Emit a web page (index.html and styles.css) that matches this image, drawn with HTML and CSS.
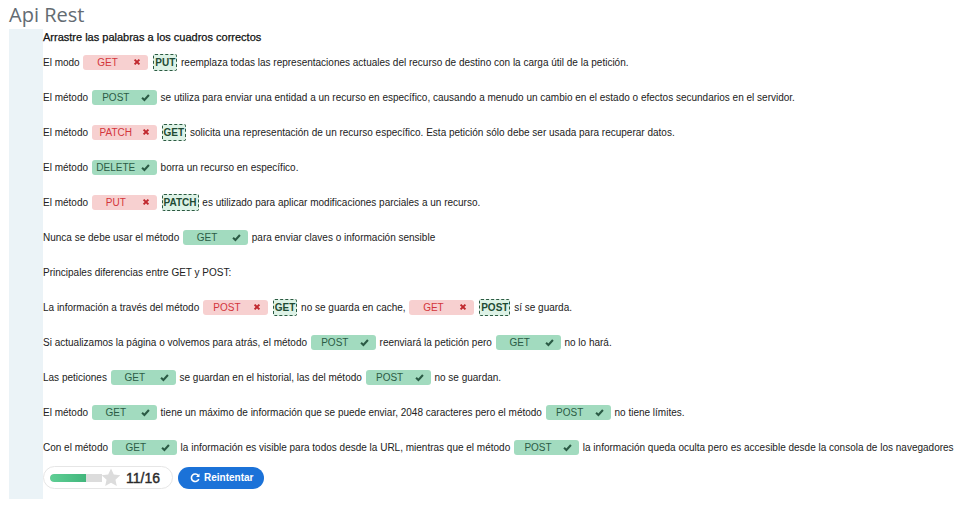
FILE: index.html
```html
<!DOCTYPE html>
<html lang="es">
<head>
<meta charset="utf-8">
<title>Api Rest</title>
<link rel="stylesheet" href="styles.css">
</head>
<body>
<h1 class="title">Api Rest</h1>
<div class="wrap">
  <div class="side"></div>
  <div class="main">
    <h2 class="heading">Arrastre las palabras a los cuadros correctos</h2>
    <div class="rows">
      <div class="row">El modo <span class="pill bad"><span class="pt">GET</span><svg class="ic" viewBox="0 0 10 10"><path d="M2 2l6 6M8 2l-6 6"/></svg></span> <span class="ans">PUT</span> reemplaza todas las representaciones actuales del recurso de destino con la carga útil de la petición.</div>
      <div class="row">El método <span class="pill ok"><span class="pt">POST</span><svg class="ic" viewBox="0 0 10 10"><path d="M1.2 5.2l2.6 2.6 5-5.6"/></svg></span> se utiliza para enviar una entidad a un recurso en específico, causando a menudo un cambio en el estado o efectos secundarios en el servidor.</div>
      <div class="row">El método <span class="pill bad"><span class="pt">PATCH</span><svg class="ic" viewBox="0 0 10 10"><path d="M2 2l6 6M8 2l-6 6"/></svg></span> <span class="ans">GET</span> solicita una representación de un recurso específico. Esta petición sólo debe ser usada para recuperar datos.</div>
      <div class="row">El método <span class="pill ok"><span class="pt">DELETE</span><svg class="ic" viewBox="0 0 10 10"><path d="M1.2 5.2l2.6 2.6 5-5.6"/></svg></span> borra un recurso en específico.</div>
      <div class="row">El método <span class="pill bad"><span class="pt">PUT</span><svg class="ic" viewBox="0 0 10 10"><path d="M2 2l6 6M8 2l-6 6"/></svg></span> <span class="ans">PATCH</span> es utilizado para aplicar modificaciones parciales a un recurso.</div>
      <div class="row">Nunca se debe usar el método <span class="pill ok"><span class="pt">GET</span><svg class="ic" viewBox="0 0 10 10"><path d="M1.2 5.2l2.6 2.6 5-5.6"/></svg></span> para enviar claves o información sensible</div>
      <div class="row">Principales diferencias entre GET y POST:</div>
      <div class="row">La información a través del método <span class="pill bad"><span class="pt">POST</span><svg class="ic" viewBox="0 0 10 10"><path d="M2 2l6 6M8 2l-6 6"/></svg></span> <span class="ans">GET</span> no se guarda en cache, <span class="pill bad"><span class="pt">GET</span><svg class="ic" viewBox="0 0 10 10"><path d="M2 2l6 6M8 2l-6 6"/></svg></span> <span class="ans">POST</span> sí se guarda.</div>
      <div class="row">Si actualizamos la página o volvemos para atrás, el método <span class="pill ok"><span class="pt">POST</span><svg class="ic" viewBox="0 0 10 10"><path d="M1.2 5.2l2.6 2.6 5-5.6"/></svg></span> reenviará la petición pero <span class="pill ok"><span class="pt">GET</span><svg class="ic" viewBox="0 0 10 10"><path d="M1.2 5.2l2.6 2.6 5-5.6"/></svg></span> no lo hará.</div>
      <div class="row">Las peticiones <span class="pill ok"><span class="pt">GET</span><svg class="ic" viewBox="0 0 10 10"><path d="M1.2 5.2l2.6 2.6 5-5.6"/></svg></span> se guardan en el historial, las del método <span class="pill ok"><span class="pt">POST</span><svg class="ic" viewBox="0 0 10 10"><path d="M1.2 5.2l2.6 2.6 5-5.6"/></svg></span> no se guardan.</div>
      <div class="row">El método <span class="pill ok"><span class="pt">GET</span><svg class="ic" viewBox="0 0 10 10"><path d="M1.2 5.2l2.6 2.6 5-5.6"/></svg></span> tiene un máximo de información que se puede enviar, 2048 caracteres pero el método <span class="pill ok"><span class="pt">POST</span><svg class="ic" viewBox="0 0 10 10"><path d="M1.2 5.2l2.6 2.6 5-5.6"/></svg></span> no tiene límites.</div>
      <div class="row">Con el método <span class="pill ok"><span class="pt">GET</span><svg class="ic" viewBox="0 0 10 10"><path d="M1.2 5.2l2.6 2.6 5-5.6"/></svg></span> la información es visible para todos desde la URL, mientras que el método <span class="pill ok"><span class="pt">POST</span><svg class="ic" viewBox="0 0 10 10"><path d="M1.2 5.2l2.6 2.6 5-5.6"/></svg></span> la información queda oculta pero es accesible desde la consola de los navegadores</div>
    </div>
    <div class="footer">
      <div class="score">
        <div class="bar"><div class="fill" style="width:69%"></div></div>
        <svg class="star" width="20" height="19" viewBox="0 0 24 23"><path d="M12 0.5l3.4 7.3 7.9 0.9-5.9 5.4 1.6 7.8L12 17.9l-7 4 1.6-7.8L0.7 8.7l7.9-0.9z" fill="#dcdcdc"/></svg>
        <span class="num">11/16</span>
      </div>
      <button class="retry"><svg width="10" height="10" viewBox="0 0 16 16"><path d="M13.2 4.2A6 6 0 1 0 14 9.5" fill="none" stroke="#fff" stroke-width="2.6"/><path d="M15.2 0.8v5.6H9.6z" fill="#fff"/></svg>Reintentar</button>
    </div>
  </div>
</div>
</body>
</html>
```

FILE: styles.css
```css
html, body {
  margin: 0;
  padding: 0;
  background: #fff;
}
body {
  font-family: "Liberation Sans", Arial, sans-serif;
  color: #222;
}
.title {
  margin: 0;
  padding: 2px 0 0 9px;
  height: 27px;
  font-family: "Open Sans", "Liberation Sans", sans-serif;
  font-weight: 400;
  font-size: 20px;
  line-height: 26px;
  color: #646b72;
}
.wrap {
  display: flex;
  margin-left: 9px;
  height: 470px;
}
.side {
  width: 34px;
  flex: none;
  background: #ebf3f7;
}
.main {
  flex: 1;
  padding-left: 0;
}
.heading {
  margin: 0;
  padding-top: 1px;
  font-size: 11px;
  font-weight: normal;
  -webkit-text-stroke: 0.25px #111;
  line-height: 14px;
  color: #111;
}
.rows {
  display: flex;
  flex-direction: column;
  gap: 18px;
  margin-top: 10px;
}
.row {
  font-size: 10px;
  line-height: 17px;
  height: 17px;
  white-space: nowrap;
  color: #222;
}
.pill {
  display: inline-flex;
  align-items: center;
  width: 65px;
  height: 15px;
  border-radius: 3px;
  vertical-align: middle;
  margin: 0 1px;
  box-sizing: border-box;
  padding-right: 7px;
  position: relative;
  top: -1px;
}
.pt {
  width: 48px;
  text-align: center;
  font-size: 10px;
  line-height: 15px;
}
.ic {
  margin-left: auto;
  width: 9px;
  height: 9px;
  fill: none;
  stroke-width: 2.3;
}
.bad {
  background: #f7d0d0;
  color: #d3353b;
}
.bad .ic {
  stroke: #c0282e;
  width: 8px;
  height: 8px;
  stroke-width: 2.5;
}
.ok {
  background: #a2dbbf;
  color: #2b5b45;
}
.ok .ic {
  stroke: #2b5b45;
}
.ans {
  display: inline-block;
  vertical-align: middle;
  height: 17px;
  line-height: 15px;
  padding: 0 1px;
  box-sizing: border-box;
  border: 1px dashed #2c5a42;
  border-radius: 2px;
  background: #ddf2e6;
  color: #1f4a33;
  font-weight: bold;
  font-size: 10px;
  margin: 0 1px;
  position: relative;
  top: -1px;
}
.footer {
  display: flex;
  align-items: center;
  gap: 5px;
  margin-top: 10px;
}
.score {
  display: flex;
  align-items: center;
  width: 130px;
  height: 23px;
  box-sizing: border-box;
  border: 1px solid #e6e6e6;
  border-radius: 12px;
  padding-left: 6px;
}
.bar {
  width: 52px;
  height: 8px;
  background: #dcdcdc;
  border-radius: 4px 0 0 4px;
  overflow: hidden;
}
.fill {
  height: 100%;
  background: linear-gradient(90deg, #5fcf95, #42b67c);
  border-radius: 4px 0 0 4px;
}
.star {
  margin-left: -1px;
  display: block;
}
.num {
  margin-left: 5px;
  font-size: 14px;
  font-weight: normal;
  -webkit-text-stroke: 0.4px #2a2a2a;
  color: #2a2a2a;
}
.retry {
  display: flex;
  align-items: center;
  gap: 4px;
  height: 22px;
  border: none;
  border-radius: 11px;
  background: #1b72d8;
  color: #fff;
  font-family: "Liberation Sans", Arial, sans-serif;
  font-size: 10px;
  font-weight: bold;
  padding: 0 11px 0 12px;
  cursor: pointer;
}
```
